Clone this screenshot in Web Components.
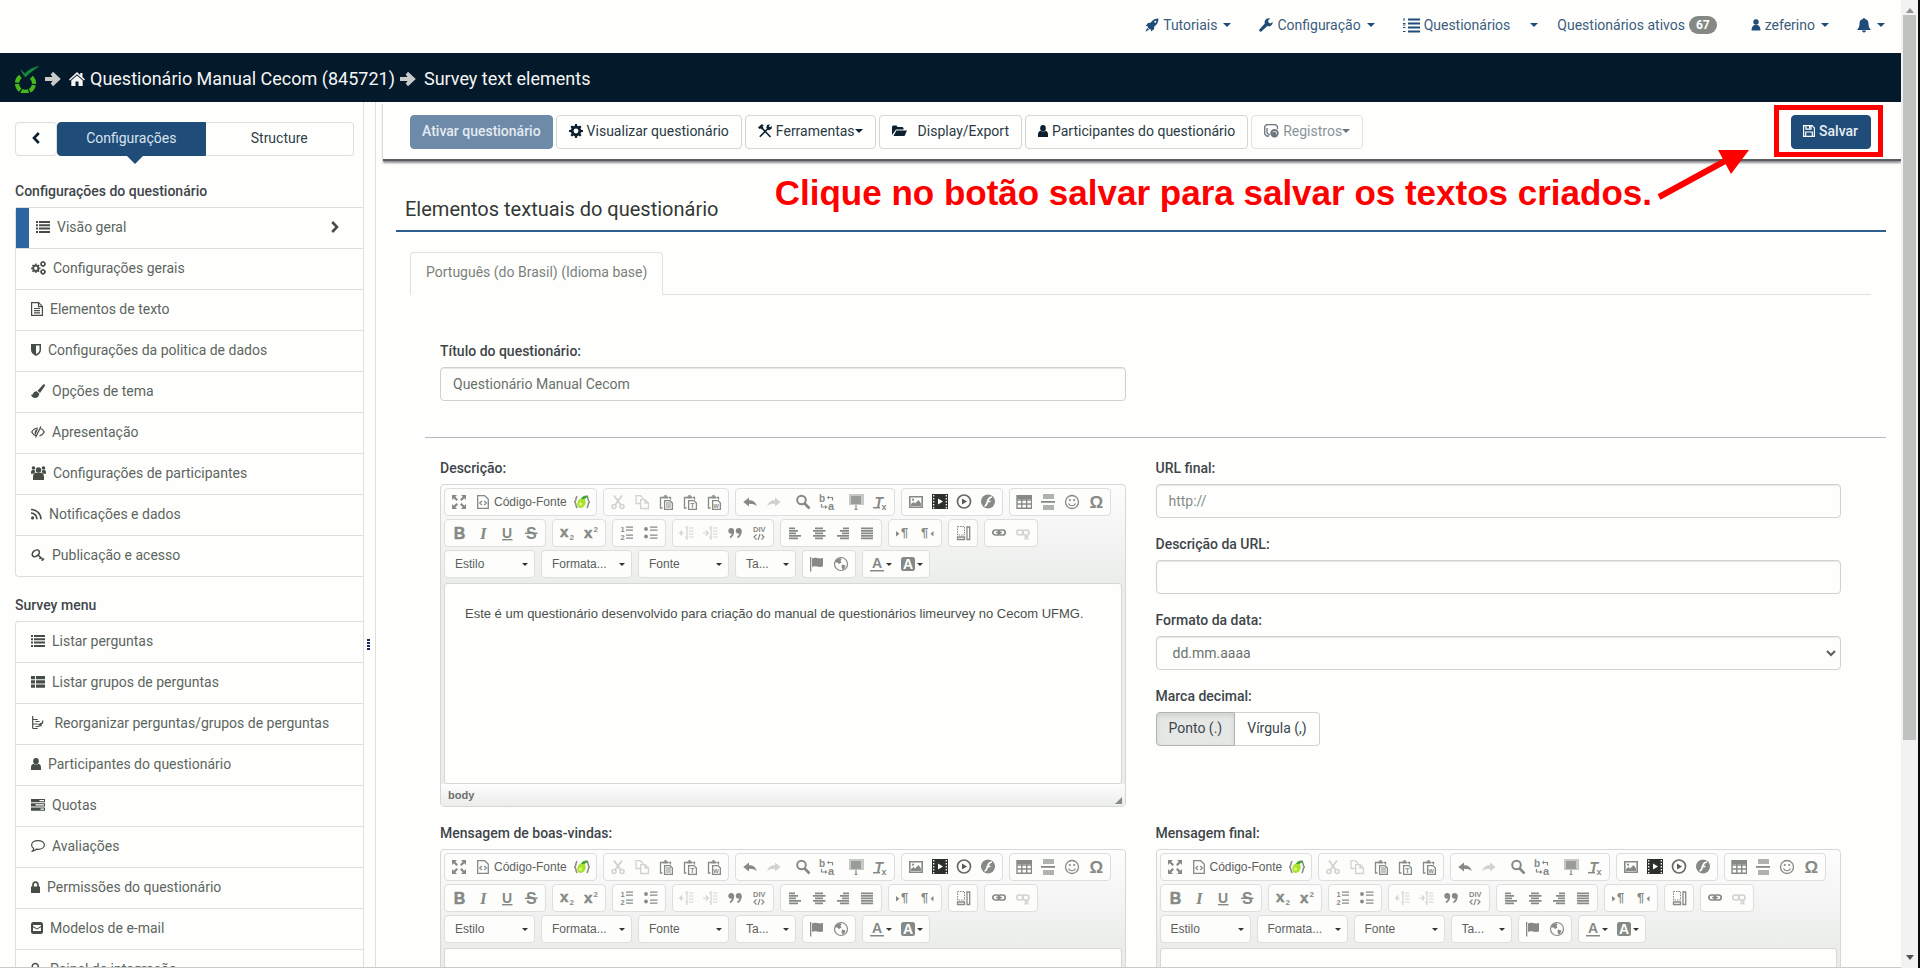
<!DOCTYPE html>
<html lang="pt-BR">
<head>
<meta charset="utf-8">
<meta name="viewport" content="width=device-width, initial-scale=1">
<title>Questionário Manual Cecom - Elementos textuais</title>
<style>
  html, body { margin: 0; height: 100%; }
  body {
    font: 14px/20px Roboto, "Liberation Sans", sans-serif;
    color: #4d554f; background: #fefffd; overflow: hidden;
    --primary: #1f4c79; --ink: #0c2030; --line: #dcdfdc; --red: #fe0000;
  }
</style>
</head>
<body>
<ls-app></ls-app>
<script>
/* name: [width, height, viewBox, content] */
const S = (w, d) => `<path fill="none" stroke="currentColor" stroke-width="${w}" d="${d}"/>`;
const F = d => `<path d="${d}"/>`;
const T = (x, y, size, text, extra = '') => `<text x="${x}" y="${y}" font-size="${size}" font-family="Liberation Sans, sans-serif" font-weight="bold" ${extra}>${text}</text>`;
const COG = 'M7 0h2l.4 2 1.5.7L12.700 1.600l1.600 1.600-1.200 1.800.7 1.500 2.200.4v2.200l-2.200.4-.7 1.500 1.200 1.800-1.600 1.600-1.800-1.200-1.500.7-.4 2.100h-2l-.4-2.100-1.500-.7-1.800 1.200-1.600-1.600 1.200-1.800-.7-1.500L0 9.100V6.900l2.200-.4.7-1.500-1.200-1.800 1.600-1.600 1.800 1.100 1.500-.7zM8 5.200a2.800 2.800 0 1 0 0 5.600 2.800 2.800 0 0 0 0-5.600z';
const CLIP = S(1.3, 'M4.500 14H2.500V3.500h2.500M10.500 3.500h2v2') + F('M5 2.500h5v2H5zM6.500 1h2v2h-2z') + S(1.3, 'M6.600 6.600h5.400l2.400 2.400v6.300H6.600z');
const ICONS = {
  rocket: [14, 14, '0 0 14 14', F('M13.500 .5c-3.500 0-6 1.500-8 4.300L3 5 .7 8l2.300.3-.5 1 2.300 2.300 1-.5.2 2.400 3-2.200.3-2.700c2.800-2 4.200-4.500 4.200-8.100zM2.200 10l-1.900 3.700L4 11.800z') + '<circle cx="10.300" cy="3.700" r="1" fill="#fff"/>'],
  wrench: [14, 14, '0 0 14 14', F('M9.500 .3a4 4 0 0 0-3.700 5.200L.6 11.300a1.300 1.300 0 0 0 2 1.900l5.800-5.200A4 4 0 0 0 13.700 3.900l-2.400 1.500-2-1.100V2.100L11.500.8A5 5 0 0 0 9.500.3z')],
  listol: [17, 16, '0 0 17 16', F('M5 1.500h12v2H5zM5 5.500h12v2H5zM5 9.500h12v2H5zM5 13.500h12v2H5z') + S(1, 'M1 1v3M0 6.500h2.500M0 8h2.500M0 10.500h2.500M0 14.500h2.500')],
  person: [10, 14, '0 0 10 14', '<circle cx="5" cy="4" r="2.700"/>' + F('M.5 12.500c0-3.500 1.500-5 3-5.500h3c1.500.5 3 2 3 5.500z')],
  bell: [14, 15, '0 0 14 15', F('M7 0a1 1 0 0 1 1 1.100c2.200.5 3.500 2.100 3.500 4.500 0 3 .8 4.600 2.500 6.400H0c1.700-1.800 2.500-3.400 2.500-6.400 0-2.400 1.300-4 3.500-4.500A1 1 0 0 1 7 0zM5 12.600h4a2 2 0 0 1-4 0z')],
  caret: [8, 4, '0 0 8 4', F('M0 0h8L4 4z')],
  caretsmall: [6, 3, '0 0 6 3', F('M0 0h6L3 3z')],
  arrow: [16, 16, '0 0 16 16', F('M0 6h7.500L5.700 3.500 8 .8 15.800 8 8 15.200 5.700 12.500 7.500 10H0z')],
  home: [16, 14, '0 0 16 14', F('M8 0l3.200 3V1h2.300v4L16 7.500l-1 1L8 2.200 1 8.500l-1-1zM8 3.500l5.700 5V14H9.500V9.500h-3V14H2.300V8.500z')],
  logo: [25, 27, '0 0 25 27', '<path d="M5.500 10.500A8.500 8.500 0 1 0 15.500 10.500" fill="none" stroke="#46b81c" stroke-width="4.200" stroke-dasharray="7.200 1.300"/><path d="M5.500 3l4.500 4.500C13 4 17 1.500 24.500 0 19 4 14 7.500 10.500 11.500 8.500 9.500 6.500 6.500 5.500 3z" fill="#14873c"/>'],
  chevleft: [8, 12, '0 0 8 12', S(2.6, 'M6.800 1L2 6l4.800 5')],
  chevright: [8, 12, '0 0 8 12', S(2.6, 'M1.200 1L6 6l-4.800 5')],
  chevdown: [10, 7, '0 0 10 7', S(2, 'M1 1l4 4 4-4')],
  list: [14, 12, '0 0 14 12', F('M0 0h2v2H0zM3 0h11v2H3zM0 3.300h2v2H0zM3 3.300h11v2H3zM0 6.600h2v2H0zM3 6.600h11v2H3zM0 9.900h2v2H0zM3 9.900h11v2H3z')],
  thlist: [14, 12, '0 0 14 12', F('M0 0h4v3.200H0zM5 0h9v3.200H5zM0 4.300h4v3.200H0zM5 4.300h9v3.200H5zM0 8.600h4v3.200H0zM5 8.600h9v3.200H5z')],
  cogs: [15, 14, '0 0 15 14', `<g transform="translate(0 2.500) scale(.6)"><path fill-rule="evenodd" d="${COG}"/></g>` + '<g fill="none" stroke="currentColor" stroke-width="1.500"><circle cx="12" cy="3" r="1.900"/><circle cx="12" cy="10.800" r="1.900"/></g>' + S(1, 'M12 0v1M12 5v1M9.200 3h1M14 3h1M12 7.800v1M12 13v1M9.200 10.800h1M14 10.800h1')],
  file: [12, 14, '0 0 12 14', S(1.2, 'M.6 .6h7l3.800 3.800v9H.600zM7.500 .6v4h4M3 6.500h6M3 8.700h6M3 10.900h6')],
  shield: [10, 12, '0 0 10 12', F('M0 0h10v6c0 2.600-2 4.600-5 6-3-1.400-5-3.400-5-6zM5 1.500v8.800c2.300-1.200 3.500-2.600 3.500-4.300V1.500z')],
  brush: [14, 14, '0 0 14 14', F('M13.600.4c.6.6.5 1.200.1 1.900L9 9 6.500 6.700 12 .7c.6-.5 1.100-.8 1.600-.3zM5.800 7.300l2.600 2.400C8 12.500 6.300 14 4 14c-2.200 0-3.500-1.300-4-3.500 1 .6 1.600.4 2-.7.600-1.700 2-2.500 3.800-2.500z')],
  eye: [14, 12, '0 0 14 12', S(1.2, 'M5 9.800C3 9.200 1.600 7.800.7 6 2.200 3.400 4.500 2 7 2M9 2.200c2 .6 3.400 2 4.300 3.800-1 1.900-2.600 3.300-4.800 3.900M9.900.4L4.600 11.500') + F('M7 2.800L4.500 9C3 7.500 3.300 3.500 7 2.800z')],
  users: [15, 14, '0 0 15 14', '<circle cx="7.500" cy="4" r="2.700"/><circle cx="2.500" cy="2" r="1.800"/><circle cx="12.500" cy="2" r="1.800"/>' + F('M2 14v-3c0-2.500 1-4 2.500-4.300h6C12 7 13 8.500 13 11v3zM0 7c0-2 .6-3 1.500-3h2l.8 2L2.500 7.800H0zM15 7c0-2-.6-3-1.500-3h-2l-.8 2 1.800 1.800H15z')],
  rss: [11, 12, '0 0 11 12', '<circle cx="1.600" cy="9.900" r="1.600"/>' + S(1.7, 'M0 5.200a5.800 5.800 0 0 1 5.900 6M0 1.500a9.600 9.600 0 0 1 9.900 9.700')],
  key: [14, 13, '0 0 14 13', '<ellipse cx="4.800" cy="4.300" rx="4" ry="2.800" transform="rotate(-40 4.800 4.300)" fill="none" stroke="currentColor" stroke-width="1.600"/>' + S(1.6, 'M7 6l5.500 5M8.500 10l1.700-1.800M10.800 11.800l2.200-2.300')],
  tree: [13, 14, '0 0 13 14', S(1.2, 'M1.700 0v12.500M1.700 3.500h5M1.700 8h5M1.700 12.500h5M4.500 5.500h4M4.500 10.500h4M8 8.500c2.500 0 3.800-1 3.800-4') + F('M10.500 6.500L6.500 8.800l4 2z')],
  user: [10, 12, '0 0 10 12', '<ellipse cx="5" cy="3.200" rx="2.800" ry="3.200"/>' + F('M0 12V9.500C0 7.300 1 6 2.500 5.700c1.500 1.200 3.500 1.200 5 0C9 6 10 7.300 10 9.500V12z')],
  tasks: [14, 12, '0 0 14 12', F('M0 0h14v3.200H0zM0 4.300h14v3.200H0zM0 8.600h14v3.200H0z') + '<path fill="#fefffd" d="M8.500 1h4.500v1.200H8.500zM4.500 5.300H13v1.200H4.500zM9.500 9.600H13v1.200H9.500z"/>'],
  comment: [14, 12, '0 0 14 12', S(1.2, 'M7 .6c3.600 0 6.400 1.900 6.400 4.400S10.600 9.300 7 9.300c-.6 0-1 0-1.600-.1C4.200 10.300 3 10.900 1.500 11.200c.7-.7 1-1.500 1.200-2.600C1.400 7.700.6 6.400.6 5 .6 2.500 3.400.6 7 .6z')],
  lock: [9, 12, '0 0 9 12', F('M0 5.500h9V12H0z') + S(1.7, 'M2 6V3.700a2.500 2.500 0 0 1 5 0V6')],
  mail: [12, 12, '0 0 12 12', '<rect width="12" height="12" rx="2.500"/><path fill="#fefffd" d="M2 3h8v1L6 6.500 2 4zM2 5.200l4 2.300 4-2.300V9H2z"/>'],
  link2: [12, 14, '0 0 12 14', S(1.5, 'M4 7.500a3 3 0 1 1 2.500-1M5 5.500l4 4-2 2.500')],
  gear: [14, 14, '0 0 16 16', `<path fill-rule="evenodd" d="${COG}"/>`],
  tools: [14, 14, '0 0 14 14', S(1.6, 'M1.800 12.800L10.500 4M3.500 3.500l9 9.500') + F('M0 3.500L3.500.3 6 1.200 4.500 2.500l1 1.500L4 5.500 2.500 4.500 1.500 5zM9 1l3-.8-1.200 2.200 1.200.800L14 2l-.5 3-3 1.200L8.300 4z')],
  folder: [15, 12, '0 0 15 12', F('M0 10V1.500L1 .500h3.500l1 1.500h5l1 1V4.500H4z') + F('M4.300 5.500H15L12.500 11h-11z')],
  log: [15, 14, '0 0 15 14', S(1.3, 'M5 12H2.500L.7 10V2.500L2.500.700h9l2 1.800V5M3 4v5l3 2M3 4') + '<circle cx="10.500" cy="9.300" r="3.300" fill="none" stroke="currentColor" stroke-width="1.800"/>' + F('M8.500 7.500l3 .5 1 3-2.500 2-2-2.500z')],
  save: [12, 12, '0 0 12 12', S(1.2, 'M.6 .600h8.500l2.300 2.300v8.500H.600zM3 .600v3.500h5V.600M2.700 11.400V7h6.600v4.400')+ F('M6 1h1.500v2.500H6z')],
  maximize: [16, 16, '0 0 16 16', F('M1 1h5L4.300 2.700 7 5.400 5.400 7 2.700 4.300 1 6zM15 1v5l-1.700-1.700L10.600 7 9 5.400l2.700-2.700L10 1zM1 15v-5l1.700 1.700L5.400 9 7 10.600l-2.700 2.700L6 15zM15 15h-5l1.700-1.700L9 10.600 10.600 9l2.700 2.700L15 10z')],
  source: [16, 16, '0 0 16 16', S(1.3, 'M2.700 1.700h7l3.600 3.600v9H2.700zM7 7L4.800 9 7 11M9.200 7l2.200 2-2.200 2')],
  lime: [16, 16, '0 0 16 16', S(1.5, 'M3.500 2.500C1 2.500 3 7 .5 8c2.500 1 .5 5.500 3 5.500M12.500 2.500c2.500 0 .5 4.500 3 5.500-2.500 1-.5 5.500-3 5.500') + '<ellipse cx="7.500" cy="9" rx="4" ry="5.200" transform="rotate(25 7.500 9)" fill="#a6e32a"/><path d="M7 5c1-3 4-4 7-3.500C13 4.500 10 5.500 7 5z" fill="#3fa52e"/><circle cx="6.500" cy="10" r="1.700" fill="#e3f86f"/>'],
  cut: [16, 16, '0 0 16 16', S(1.8, 'M4 1.500l6.800 9.500M12 1.500L5.200 11') + '<g fill="none" stroke="currentColor" stroke-width="1.600"><circle cx="4" cy="12.500" r="2"/><circle cx="12" cy="12.500" r="2"/></g>'],
  copy: [16, 16, '0 0 16 16', S(1.3, 'M6 9.500H2V1.700h4.500l3 3M6.700 5.700h4.500l3.300 3.300v5.500H6.700zM11 5.700v3.500h3.500')],
  paste: [16, 16, '0 0 16 16', CLIP + F('M8 8.500h5v1H8zM8 10.500h5v1H8zM8 12.500h5v1H8z')],
  pastet: [16, 16, '0 0 16 16', CLIP + T(8.3, 13.8, 7, 'T')],
  pastew: [16, 16, '0 0 16 16', CLIP + T(7.3, 13.8, 6, 'W')],
  undo: [16, 16, '0 0 16 16', F('M1.300 8L7 3.500V6.300c4 0 7 1.700 7.700 6C13 10.500 11 9.800 7 9.800v2.700z')],
  redo: [16, 16, '0 0 16 16', F('M14.700 8L9 3.500V6.300c-4 0-7 1.700-7.700 6C3 10.500 5 9.800 9 9.800v2.700z')],
  find: [16, 16, '0 0 16 16', '<circle cx="6.500" cy="6" r="4.300" fill="none" stroke="currentColor" stroke-width="2"/>' + S(2.6, 'M9.700 9.500l4.800 5')],
  replace: [16, 16, '0 0 16 16', T(0, 8, 10, 'b') + T(9, 15.500, 11, 'a') + S(1.2, 'M9 3.500h4.500v3M2.500 10v3H7') + F('M10 1.500L8 3.500l2 2zM6 11l2.500 2L6 15z')],
  selectall: [16, 16, '0 0 16 16', '<rect x="1" y="0" width="15" height="11" opacity=".45"/><rect x="3" y="2" width="10" height="8" opacity=".7"/>' + S(1.2, 'M8 11v5M6.500 15.500h3')],
  removeformat: [16, 16, '0 0 16 16', T(2.500, 12.500, 14, 'T', 'font-style="italic"') + S(1.5, 'M1 13.700h7') + T(9.500, 15.700, 9, 'x')],
  image: [16, 16, '0 0 16 16', S(1.6, 'M1.800 2.800h12.400v10.400H1.800z') + F('M3 12V10l2.500-2L7 9.500 10.500 6 13 9.500V12z') + '<circle cx="5" cy="5.700" r="1.100"/>'],
  film: [16, 16, '0 0 16 16', '<rect width="16" height="15" fill="#2c302c"/><path stroke="#fff" stroke-width="1.300" stroke-dasharray="1.500 1.500" d="M1.700 1v14M14.300 1v14"/><path fill="#fff" d="M6 4.500l5 3-5 3z"/>'],
  play: [16, 16, '0 0 16 16', '<circle cx="8" cy="7.500" r="6.500" fill="none" stroke="#666b66" stroke-width="1.700"/><path fill="#555b55" d="M6 4.500l5 3-5 3z"/>'],
  flash: [16, 16, '0 0 16 16', '<circle cx="8" cy="7.500" r="7"/>' + '<path fill="none" stroke="#fff" stroke-width="1.700" d="M12 3c-3 0-3.500 2-4.500 5S6 12 4.500 12M6.500 7.500h4"/>'],
  table: [16, 16, '0 0 16 16', S(1.4, 'M1 1.700h14.500v12.500H1zM1 6h14.500M1 10h14.500M5.800 4v10M10.700 4v10') + F('M1 1h14.500v4H1z')],
  hr: [16, 16, '0 0 16 16', '<path opacity=".65" d="M3 0h11v5H3zM3 11h11v5H3z"/>' + F('M1 7h14v1.800H1z')],
  smiley: [16, 16, '0 0 16 16', '<circle cx="8" cy="8" r="6.500" fill="none" stroke="currentColor" stroke-width="1.300"/><circle cx="5.800" cy="6" r="1.100"/><circle cx="10.200" cy="6" r="1.100"/>' + S(1.2, 'M4.500 9.500c1.500 3 5.500 3 7 0')],
  omega: [16, 16, '0 0 16 16', T(1.500, 14, 17, 'Ω')],
  bold: [16, 16, '0 0 16 16', T(2.700, 14, 16, 'B', 'stroke="currentColor" stroke-width=".5"')],
  italic: [16, 16, '0 0 16 16', `<text x="5" y="14" font-size="17" font-weight="bold" font-style="italic" font-family="Liberation Serif, serif">I</text>`],
  underline: [16, 16, '0 0 16 16', T(3, 12.500, 14, 'U') + F('M3 14h10.500v1.400H3z')],
  strike: [16, 16, '0 0 16 16', T(3, 14, 16, 'S') + F('M2 7.500h12.500v1.500H2z')],
  sub: [16, 16, '0 0 16 16', T(1, 11.500, 15, 'x', 'stroke="currentColor" stroke-width=".5"') + T(10.500, 15, 8, '2')],
  sup: [16, 16, '0 0 16 16', T(1, 13, 15, 'x', 'stroke="currentColor" stroke-width=".5"') + T(10.500, 7, 8, '2')],
  ol: [16, 16, '0 0 16 16', T(1.500, 7, 7.5, '1') + T(1.500, 14.500, 7.5, '2') + F('M7 1.500h7v1.300H7zM7 4.500h7v1.300H7zM7 9.500h7v1.300H7zM7 12.500h7v1.300H7z')],
  ul: [16, 16, '0 0 16 16', '<circle cx="3" cy="4" r="1.900"/><circle cx="3" cy="11.500" r="1.900"/>' + F('M7 1.500h7.500v1.300H7zM7 4.500h7.500v1.300H7zM7 9.500h7.500v1.300H7zM7 12.500h7.500v1.300H7z')],
  outdent: [16, 16, '0 0 16 16', S(1.2, 'M8 1v14M10 3h4.500M10 6h4.500M10 9h4.500M10 12h4.500M5 8h-4M3 5.500L.8 8 3 10.500M6 3h2M6 12h2')],
  indent: [16, 16, '0 0 16 16', S(1.2, 'M8 1v14M10 3h4.500M10 6h4.500M10 9h4.500M10 12h4.500M0 8h5M3 5.500L5.200 8 3 10.500M6 3h2M6 12h2')],
  quote: [16, 16, '0 0 16 16', '<circle cx="4.200" cy="5.800" r="2.900"/><circle cx="11.700" cy="5.800" r="2.900"/>' + S(1.7, 'M6.300 5.500c.3 3.500-1 5.500-3.300 7M13.800 5.500c.3 3.500-1 5.500-3.300 7')],
  div: [16, 16, '0 0 16 16', T(2, 7, 7.5, 'DIV') + S(1.2, 'M5.500 9.500L3 12l2.500 2.500M10.500 9.500L13 12l-2.500 2.500M9 9l-2 6')],
  left: [16, 16, '0 0 16 16', F('M2 2.500h6v1.700H2zM2 5h9v1.700H2zM2 7.500h7v1.700H2zM2 10h12v1.700H2zM2 12.500h9v1.700H2z')],
  center: [16, 16, '0 0 16 16', F('M4 2.500h8v1.700H4zM2 5h12.500v1.700H2zM4 7.500h8v1.700H4zM2 10h12.500v1.700H2zM4 12.500h8v1.700H4z')],
  right: [16, 16, '0 0 16 16', F('M8 2.500h6v1.700H8zM5 5h9v1.700H5zM7 7.500h7v1.700H7zM2 10h12v1.700H2zM5 12.500h9v1.700H5z')],
  justify: [16, 16, '0 0 16 16', F('M2 2.500h12v1.700H2zM2 5h12v1.700H2zM2 7.500h12v1.700H2zM2 10h12v1.700H2zM2 12.500h12v1.700H2z')],
  ltr: [16, 16, '0 0 16 16', F('M1 6l3.500 2.800L1 11.500z') + T(6, 12, 13, '¶')],
  rtl: [16, 16, '0 0 16 16', F('M14.500 6L11.500 8.800l3 2.700z') + T(2, 12, 13, '¶')],
  fill: [16, 16, '0 0 16 16', `<path fill="none" stroke="currentColor" stroke-dasharray="1.500 1" d="M2.500 1.500h7v8.500h-7z"/>` + S(1.3, 'M2.500 12h7v2.500h-7zM12 2h2.700v12.500H12z')],
  link: [16, 16, '0 0 16 16', '<g fill="none" stroke="currentColor" stroke-width="1.700"><rect x="1.800" y="5" width="7" height="5" rx="2.500"/><rect x="7.200" y="5" width="7" height="5" rx="2.500"/></g>' + F('M5 6.900h6v1.300H5z')],
  unlink: [16, 16, '0 0 16 16', '<g fill="none" stroke="currentColor" stroke-width="1.600"><rect x="1.800" y="5" width="6.500" height="5" rx="2.500"/><rect x="7.500" y="5" width="6.500" height="5" rx="2.500"/></g>' + S(1.5, 'M9.500 10.500l4 4M13.500 10.500l-4 4')],
  flag: [16, 16, '0 0 16 16', F('M1 1h1.300v14.500H1zM3 2.500c3-2 6 1 11-.5v8.500c-5 1.500-8-1.500-11 .5z')],
  globe: [16, 16, '0 0 16 16', '<circle cx="8" cy="8" r="6.500" fill="none" stroke="currentColor" stroke-width="1.200"/>' + F('M3 4l4-2 1.500 1-1 2L8.500 6.500 6 8 4.500 6.500 2 6.500zM9 8.500l3.500 1L11 13l-1.500.5-1-2.500z')],
  color: [16, 16, '0 0 16 16', T(3, 12, 14, 'A') + F('M1 14h14v1.500H1z')],
  bgcolor: [16, 16, '0 0 16 16', '<rect x="1" y="1" width="14" height="14" rx="2.500"/>' + T(3, 13, 14, 'A', 'fill="#fff"')],
  scrollup: [8, 5, '0 0 8 5', F('M4 0l4 5H0z')]
};

/* Base class: clones a template string into an open shadow root. */
class LsElement extends HTMLElement {
  connectedCallback() {
    if (this.shadowRoot) return;
    const t = document.createElement('template');
    t.innerHTML = this.render();
    this.attachShadow({ mode: 'open' }).append(t.content.cloneNode(true));
  }
}
const RESET = `*{box-sizing:border-box} button,input,select,textarea{font:inherit;color:inherit;margin:0} a{color:inherit;text-decoration:none} ul{list-style:none;margin:0;padding:0}`;
const icon = n => `<ls-icon name="${n}"></ls-icon>`;

customElements.define('ls-icon', class extends LsElement {
  render() {
    const [w, h, vb, body] = ICONS[this.getAttribute('name')];
    return `<style>:host{display:inline-flex;flex:none}svg{display:block;fill:currentColor}</style>
      <svg width="${w}" height="${h}" viewBox="${vb}" aria-hidden="true">${body}</svg>`;
  }
});

customElements.define('ls-navbar', class extends LsElement {
  render() {
    return `<style>${RESET}
      :host{display:block;color:#3c5c7e}
      nav{display:flex;justify-content:flex-end;align-items:center;min-height:53px;padding:0 16px 3px 0}
      a{display:flex;align-items:center;gap:4px}
      a+a{margin-left:28px} ls-icon{color:var(--primary)} ls-icon:last-child{margin-left:2px}
      a.split{margin-left:20px} .split ls-icon:last-child{margin:0}
      .badge{background:#858985;color:#fff;border-radius:9px;font-weight:700;font-size:12px;line-height:18px;padding:0 7px}
      a.tight{margin-left:19px} a.wide{margin-left:34px}
    </style>
    <nav>
      <a href="#tutoriais">${icon('rocket')}<span>Tutoriais</span>${icon('caret')}</a>
      <a href="#configuracao">${icon('wrench')}<span>Configuração</span>${icon('caret')}</a>
      <a href="#questionarios">${icon('listol')}<span>Questionários</span></a>
      <a href="#menu" class="split" aria-label="Abrir menu">${icon('caret')}</a>
      <a href="#ativos" class="tight"><span>Questionários ativos</span><span class="badge">67</span></a>
      <a href="#conta" class="wide">${icon('person')}<span>zeferino</span>${icon('caret')}</a>
      <a href="#avisos" aria-label="Notificações">${icon('bell')}${icon('caret')}</a>
    </nav>`;
  }
});

customElements.define('ls-breadcrumb', class extends LsElement {
  render() {
    return `<style>${RESET}
      :host{display:block;background:#04192a;color:#f4f6f6;font-size:18px;line-height:24px}
      nav{display:flex;align-items:center;gap:5px;min-height:49px;padding:3px 15px 0}
      .sep{color:#c9cbc9} a{display:flex;align-items:center;gap:5px} .home,.here{margin-left:3px}
    </style>
    <nav aria-label="Trilha">
      <a href="#inicio" aria-label="Início">${icon('logo')}</a><ls-icon class="sep" name="arrow"></ls-icon>
      <a class="home" href="#questionario">${icon('home')}<span>Questionário Manual Cecom (845721)</span></a>
      <ls-icon class="sep" name="arrow"></ls-icon><span class="here">Survey text elements</span>
    </nav>`;
  }
});

customElements.define('ls-menu-item', class extends LsElement {
  render() {
    return `<style>${RESET}
      :host{display:block;border-top:1px solid var(--line)}
      a{display:flex;align-items:center;gap:7px;height:40px;padding:0 24px 2px 15px;color:#5d655f}
      ls-icon{color:#454d44}
      :host([active]) a{border-left:13px solid #2c66a0;padding-left:7px}
      .more{margin-left:auto}
    </style>
    <a href="#">${icon(this.getAttribute('icon'))}<span><slot></slot></span>${this.hasAttribute('active') ? '<ls-icon class="more" name="chevright"></ls-icon>' : ''}</a>`;
  }
});

customElements.define('ls-menu', class extends LsElement {
  render() {
    return `<style>${RESET}
      :host{display:block}
      h2{margin:0 0 6px;font-size:14px;line-height:20px;font-weight:500;color:#3f454a}
      div{border:1px solid var(--line);border-width:0 0 1px 1px;border-radius:4px 0 0 4px}
    </style><h2>${this.getAttribute('heading')}</h2><div><slot></slot></div>`;
  }
});

customElements.define('ls-sidebar', class extends LsElement {
  render() {
    const item = ([i, t, a]) => `<ls-menu-item icon="${i}"${a ? ' active' : ''}>${t}</ls-menu-item>`;
    const first = [['list', 'Visão geral', 1], ['cogs', 'Configurações gerais'], ['file', 'Elementos de texto'], ['shield', 'Configurações da politica de dados'], ['brush', 'Opções de tema'], ['eye', 'Apresentação'], ['users', 'Configurações de participantes'], ['rss', 'Notificações e dados'], ['key', 'Publicação e acesso']];
    const second = [['list', 'Listar perguntas'], ['thlist', 'Listar grupos de perguntas'], ['tree', '&nbsp;Reorganizar perguntas/grupos de perguntas'], ['user', 'Participantes do questionário'], ['tasks', 'Quotas'], ['comment', 'Avaliações'], ['lock', 'Permissões do questionário'], ['mail', 'Modelos de e-mail'], ['link2', 'Painel de integração']];
    return `<style>${RESET}
      :host{display:block;padding:20px 0 0 15px;border-right:1px solid var(--line)}
      .tabs{display:grid;grid-template-columns:42px 1fr 1fr;padding-right:9px;margin-bottom:25px}
      button{height:34px;background:#fefffd;border:1px solid var(--line);border-radius:4px;display:flex;align-items:center;justify-content:center;padding:0 0 2px;color:#30404a;position:relative}
      button:first-child{color:var(--ink)}
      .on{background:var(--primary);border-color:var(--primary);color:#d9e4ee;border-radius:4px 0 0 4px}
      .on::after{content:"";position:absolute;left:50%;margin-left:-4px;top:33px;border:8px solid transparent;border-top-color:var(--primary);border-bottom:0}
      .off{border-left:0;border-radius:0 4px 4px 0}
      ls-menu+ls-menu{margin-top:18px}
    </style>
    <div class="tabs"><button aria-label="Recolher">${icon('chevleft')}</button><button class="on">Configurações</button><button class="off">Structure</button></div>
    <ls-menu heading="Configurações do questionário">${first.map(item).join('')}</ls-menu>
    <ls-menu heading="Survey menu">${second.map(item).join('')}</ls-menu>`;
  }
});

customElements.define('ls-resizer', class extends LsElement {
  render() {
    return `<style>:host{display:flex;justify-content:flex-start;padding:537px 0 0 3px;border-right:1px solid var(--line)}
      i{width:3px;height:11px;background:repeating-linear-gradient(#1d2760 0 2px,transparent 2px 3px)}</style><i></i>`;
  }
});

customElements.define('ls-callout', class extends LsElement {
  render() {
    return `<style>
      :host{position:absolute;right:152px;top:44px;display:flex;align-items:flex-start;color:var(--red);pointer-events:none}
      p{margin:27px 5px 0 0;font:bold 35px/40px "Liberation Sans",sans-serif;white-space:nowrap}
      svg{display:block}
    </style>
    <p><slot></slot></p>
    <svg width="92" height="56" viewBox="0 0 92 56" aria-hidden="true"><path d="M2 51L68 15" stroke="#fe0000" stroke-width="6"/><path d="M92 4H61l13 24z" fill="#fe0000"/></svg>`;
  }
});

customElements.define('ls-actions', class extends LsElement {
  render() {
    return `<style>${RESET}
      :host{display:flex;gap:3px;margin-left:7px;padding:13px 30px 10px 27px;border-bottom:2px solid #5b5c60;box-shadow:0 2px 2px #8d8e90}
      button{height:34px;display:flex;align-items:center;gap:4px;padding:0 12px 2px;border:1px solid #d3d6d3;border-radius:4px;background:#fefffd;color:#2b3a44;white-space:nowrap}
      ls-icon{color:var(--ink)}
      .go{background:#6d8aa8;border-color:#6d8aa8;color:#e4ebf1;font-weight:500;padding:0 11px 2px}
      .drop{gap:0} .drop ls-icon:first-child{margin-right:4px}
      .export{gap:11px} .mute{color:#8b939a;border-color:#e2e4e2} .mute ls-icon{color:#6a747c}
      .save{margin-left:auto;position:relative}
      .save button{background:var(--primary);border-color:var(--primary);color:#e9eef3;font-weight:500;padding:0 12px 2px 11px} .save ls-icon{color:#fff}
      .mark{position:absolute;inset:-10px -12px -8px -17px;border:5px solid var(--red);pointer-events:none}
    </style>
    <button class="go">Ativar questionário</button>
    <button>${icon('gear')}Visualizar questionário</button>
    <button class="drop">${icon('tools')}Ferramentas${icon('caret')}</button>
    <button class="export">${icon('folder')}Display/Export</button>
    <button>${icon('user')}Participantes do questionário</button>
    <button class="drop mute">${icon('log')}Registros${icon('caret')}</button>
    <div class="save"><button>${icon('save')}Salvar</button><div class="mark"></div></div>`;
  }
});

const FIELD = `${RESET}
  :host{display:block}
  label,.label{display:block;margin-bottom:6px;line-height:20px;font-weight:500;color:#3f454a}
  .box{width:100%;height:34px;display:block;border:1px solid #cfd2cf;border-radius:4px;background:#fefffd;padding:0 12px;color:#6a716c;box-shadow:inset 0 1px 1px #e6e8e6;outline:0}
  .box::placeholder{color:#868c87;opacity:1}`;

customElements.define('ls-text-field', class extends LsElement {
  render() {
    const a = n => this.getAttribute(n) || '';
    return `<style>${FIELD}</style><label for="f">${a('label')}</label>
      <input class="box" id="f" type="text" value="${a('value')}" placeholder="${a('placeholder')}">`;
  }
});

customElements.define('ls-select-field', class extends LsElement {
  render() {
    return `<style>${FIELD}
      .wrap{display:grid;align-items:center} .wrap>*{grid-area:1/1}
      select{appearance:none} select.box{padding-left:16px}
      ls-icon{justify-self:end;margin-right:5px;pointer-events:none;color:#5b605c}
    </style><label for="f">${this.getAttribute('label')}</label>
    <div class="wrap"><select class="box" id="f"><option>${this.getAttribute('value')}</option></select>${icon('chevdown')}</div>`;
  }
});

customElements.define('ls-toggle-field', class extends LsElement {
  render() {
    return `<style>${FIELD}
      .group{display:flex}
      .group label{height:34px;margin:0;padding:5px 12px 0;border:1px solid #d0d3d0;border-radius:4px 0 0 4px;font-weight:400;color:#3b454d}
      .group label:last-child{border-left:0;border-radius:0 4px 4px 0}
      input{position:absolute;opacity:0;pointer-events:none}
      input:checked+label{background:#e6e8e6;border-color:#b0b4b0;box-shadow:inset 0 3px 5px #cfd2cf}
    </style><span class="label" id="l">${this.getAttribute('label')}</span>
    <div class="group" role="radiogroup" aria-labelledby="l">
      <input type="radio" name="r" id="a" checked><label for="a">Ponto (.)</label>
      <input type="radio" name="r" id="b"><label for="b">Vírgula (,)</label>
    </div>`;
  }
});

customElements.define('ls-editor', class extends LsElement {
  render() {
    const b = n => {
      if (n === '|') return '<i></i>';
      const off = n[0] === '-'; if (off) n = n.slice(1);
      return `<button type="button"${off ? ' disabled' : ''} aria-label="${n}">${icon(n)}</button>`;
    };
    const g = s => `<div class="g">${s.split(' ').map(b).join('')}</div>`;
    const c = (t, k = '') => `<div class="g combo ${k}"><select aria-label="${t}"><option>${t}</option></select>${icon('caretsmall')}</div>`;
    return `<style>${FIELD}
      .editor{border:1px solid #d5d8d5;border-radius:4px;background:#ebedeb;padding:0 3px}
      .bar{margin:0 -3px;padding:3px 3px 5px;display:grid;gap:3px;background:linear-gradient(#fcfdfc,#ebedeb);border-radius:4px}
      .row{display:flex;gap:6px;flex-wrap:wrap}
      .g{display:flex;align-items:center;height:28px;border:1px solid #dcdfdc;border-radius:4px;padding:0 2px;background:#fdfefc}
      .g button{width:24px;height:24px;padding:0;border:0;background:none;color:#868a86;display:flex;align-items:center;justify-content:center}
      .g button:disabled{color:#d0d3d0}
      .g button.src{width:auto;gap:3px;padding:0 3px 0 4px;font:12px/17px "Liberation Sans",sans-serif;color:#5c605c}
      .src ls-icon{color:#868a86}
      .g i{width:5px}
      .g button.dd{width:31px;gap:1px} .dd ls-icon+ls-icon{color:#333}
      .combo{display:grid;width:91px;padding:0;font:12px/17px "Liberation Sans",sans-serif;color:#5c605c} .combo.s{width:61px}
      .combo>*{grid-area:1/1} select{appearance:none;border:0;background:none;outline:0;padding:0 0 0 10px;height:26px;width:100%}
      .combo ls-icon{justify-self:end;margin-right:6px;pointer-events:none;color:#333}
      textarea{display:block;width:100%;height:201px;border:1px solid #d5d8d5;border-radius:3px;background:#fefffd;padding:19px 20px;resize:none;outline:0;font:13px/21px "Liberation Sans",sans-serif;color:#4a4f4b}
      .foot{display:flex;justify-content:space-between;align-items:flex-end;margin:0 -3px;padding:0 3px 2px 7px;height:22px;background:linear-gradient(#fcfdfc,#ebedeb);font:bold 11px/17px "Liberation Sans",sans-serif;color:#6a6e6a}
      .grip{border-bottom:7px solid #888c88;border-left:7px solid transparent}
    </style>
    <label for="t">${this.getAttribute('label')}</label>
    <div class="editor">
      <div class="bar">
        <div class="row"><div class="g">${b('maximize')}<button type="button" class="src">${icon('source')}Código-Fonte</button>${b('lime')}</div>
          ${g('-cut -copy paste pastet pastew')}${g('undo -redo | find replace | selectall removeformat')}${g('image film play flash')}${g('table hr smiley omega')}</div>
        <div class="row">${g('bold italic underline strike')}${g('sub sup')}${g('ol ul')}${g('-outdent -indent quote div')}${g('left center right justify')}${g('ltr rtl')}${g('fill')}${g('link -unlink')}</div>
        <div class="row">${c('Estilo')}${c('Formata...')}${c('Fonte')}${c('Ta...', 's')}${g('flag globe')}
          <div class="g"><button type="button" class="dd" aria-label="Cor do texto">${icon('color')}${icon('caretsmall')}</button><button type="button" class="dd" aria-label="Cor de fundo">${icon('bgcolor')}${icon('caretsmall')}</button></div></div>
      </div>
      <textarea id="t">${this.textContent.trim()}</textarea>
      <div class="foot"><span>body</span><span class="grip"></span></div>
    </div>`;
  }
});

customElements.define('ls-text-elements', class extends LsElement {
  render() {
    return `<style>${RESET}
      :host{display:block;padding:34px 15px 0 20px}
      h1{margin:0;padding:0 9px 7px;font-size:20px;line-height:28px;font-weight:400;color:#333835;border-bottom:2px solid #2f5d8c}
      .tabs{display:flex;margin:20px 15px 0 14px;border-bottom:1px solid #dfe2df}
      .tabs a{padding:9px 15px 12px;margin-bottom:-1px;border:1px solid #dfe2df;border-bottom-color:#fefffd;border-radius:4px 4px 0 0;color:#7b817c;background:#fefffd}
      form{margin-left:29px}
      .grid{display:grid;grid-template-columns:1fr 1fr;gap:16px 30px;padding:0 45px 0 15px}
      .head{padding-top:46px}
      hr{border:0;border-top:1px solid #b4b9c4;margin:36px 0 20px}
      .stack{display:grid;gap:16px;align-content:start}
    </style>
    <h1>Elementos textuais do questionário</h1>
    <div class="tabs"><a href="#pt-BR">Português (do Brasil) (Idioma base)</a></div>
    <form>
      <div class="grid head"><ls-text-field label="Título do questionário:" value="Questionário Manual Cecom"></ls-text-field></div>
      <hr>
      <div class="grid">
        <ls-editor label="Descrição:">Este é um questionário desenvolvido para criação do manual de questionários limeurvey no Cecom UFMG.</ls-editor>
        <div class="stack">
          <ls-text-field label="URL final:" placeholder="http://"></ls-text-field>
          <ls-text-field label="Descrição da URL:"></ls-text-field>
          <ls-select-field label="Formato da data:" value="dd.mm.aaaa"></ls-select-field>
          <ls-toggle-field label="Marca decimal:"></ls-toggle-field>
        </div>
        <ls-editor label="Mensagem de boas-vindas:"></ls-editor>
        <ls-editor label="Mensagem final:"></ls-editor>
      </div>
    </form>`;
  }
});

customElements.define('ls-scrollbar', class extends LsElement {
  render() {
    return `<style>
      :host{display:flex;flex-direction:column;align-items:center;background:#f1f2f1;border-right:2px solid #0b0b0b;color:#8f928f}
      .thumb{width:13px;flex:718;background:#c0c2c0;margin-top:2px} .rest{flex:213}
      ls-icon{margin-top:8px} .down{margin:0 0 8px;transform:rotate(180deg);color:#505350}
    </style>${icon('scrollup')}<div class="thumb"></div><div class="rest"></div><ls-icon class="down" name="scrollup"></ls-icon>`;
  }
});

customElements.define('ls-app', class extends LsElement {
  render() {
    return `<style>${RESET}
      :host{display:grid;grid-template-columns:minmax(0,1fr) 19px;height:100vh;overflow:hidden}
      .page{overflow:hidden;border-bottom:1px solid #c9ccc9}
      .work{display:grid;grid-template-columns:364px 12px minmax(0,1fr)}
      main{position:relative}
    </style>
    <div class="page">
      <ls-navbar></ls-navbar><ls-breadcrumb></ls-breadcrumb>
      <div class="work">
        <ls-sidebar></ls-sidebar><ls-resizer></ls-resizer>
        <main><ls-actions></ls-actions><ls-text-elements></ls-text-elements>
          <ls-callout>Clique no botão salvar para salvar os textos criados.</ls-callout></main>
      </div>
    </div>
    <ls-scrollbar></ls-scrollbar>`;
  }
});
</script>
</body>
</html>
